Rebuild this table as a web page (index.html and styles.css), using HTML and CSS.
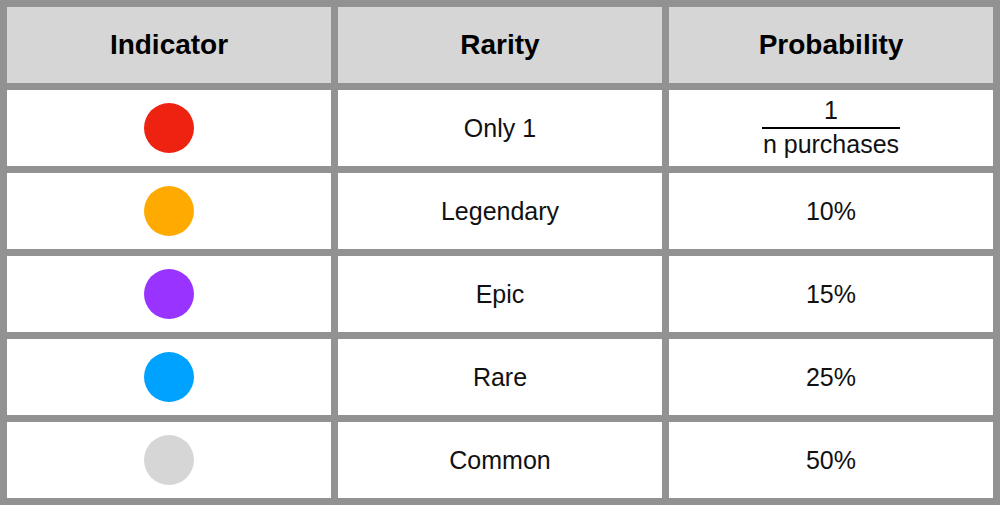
FILE: index.html
```html
<!DOCTYPE html>
<html>
<head>
<meta charset="utf-8">
<link rel="stylesheet" href="styles.css">
</head>
<body>
<div class="table">
  <div class="cell head">Indicator</div>
  <div class="cell head">Rarity</div>
  <div class="cell head">Probability</div>

  <div class="cell"><span class="dot red"></span></div>
  <div class="cell">Only 1</div>
  <div class="cell">
    <div class="frac">
      <span class="num">1</span>
      <span class="den">n purchases</span>
    </div>
  </div>

  <div class="cell"><span class="dot orange"></span></div>
  <div class="cell">Legendary</div>
  <div class="cell">10%</div>

  <div class="cell"><span class="dot purple"></span></div>
  <div class="cell">Epic</div>
  <div class="cell">15%</div>

  <div class="cell"><span class="dot blue"></span></div>
  <div class="cell">Rare</div>
  <div class="cell">25%</div>

  <div class="cell"><span class="dot gray"></span></div>
  <div class="cell">Common</div>
  <div class="cell">50%</div>
</div>
</body>
</html>
```
FILE: styles.css
```css
html, body {
  margin: 0;
  padding: 0;
  background: #929292;
}
.table {
  display: grid;
  grid-template-columns: repeat(3, 324px);
  grid-template-rows: repeat(6, 76px);
  gap: 7px;
  padding: 7px;
  width: 1000px;
  height: 505px;
  box-sizing: border-box;
  background: #929292;
  font-family: "Liberation Sans", Arial, sans-serif;
  font-size: 25px;
  color: #111;
}
.cell {
  background: #fff;
  display: flex;
  align-items: center;
  justify-content: center;
}
.cell.head {
  background: #d6d6d6;
  font-weight: bold;
  font-size: 28px;
  color: #000;
}
.dot {
  display: block;
  width: 50px;
  height: 50px;
  border-radius: 50%;
}
.red { background: #ee2211; }
.orange { background: #ffaa00; }
.purple { background: #9933ff; }
.blue { background: #00a2ff; }
.gray { background: #d6d6d6; }
.frac {
  display: flex;
  flex-direction: column;
  align-items: center;
  margin-top: -2px;
}
.num {
  line-height: 28px;
  padding: 0 0 3px;
}
.den {
  border-top: 2px solid #000;
  line-height: 30px;
  padding: 0 1px;
}
```
